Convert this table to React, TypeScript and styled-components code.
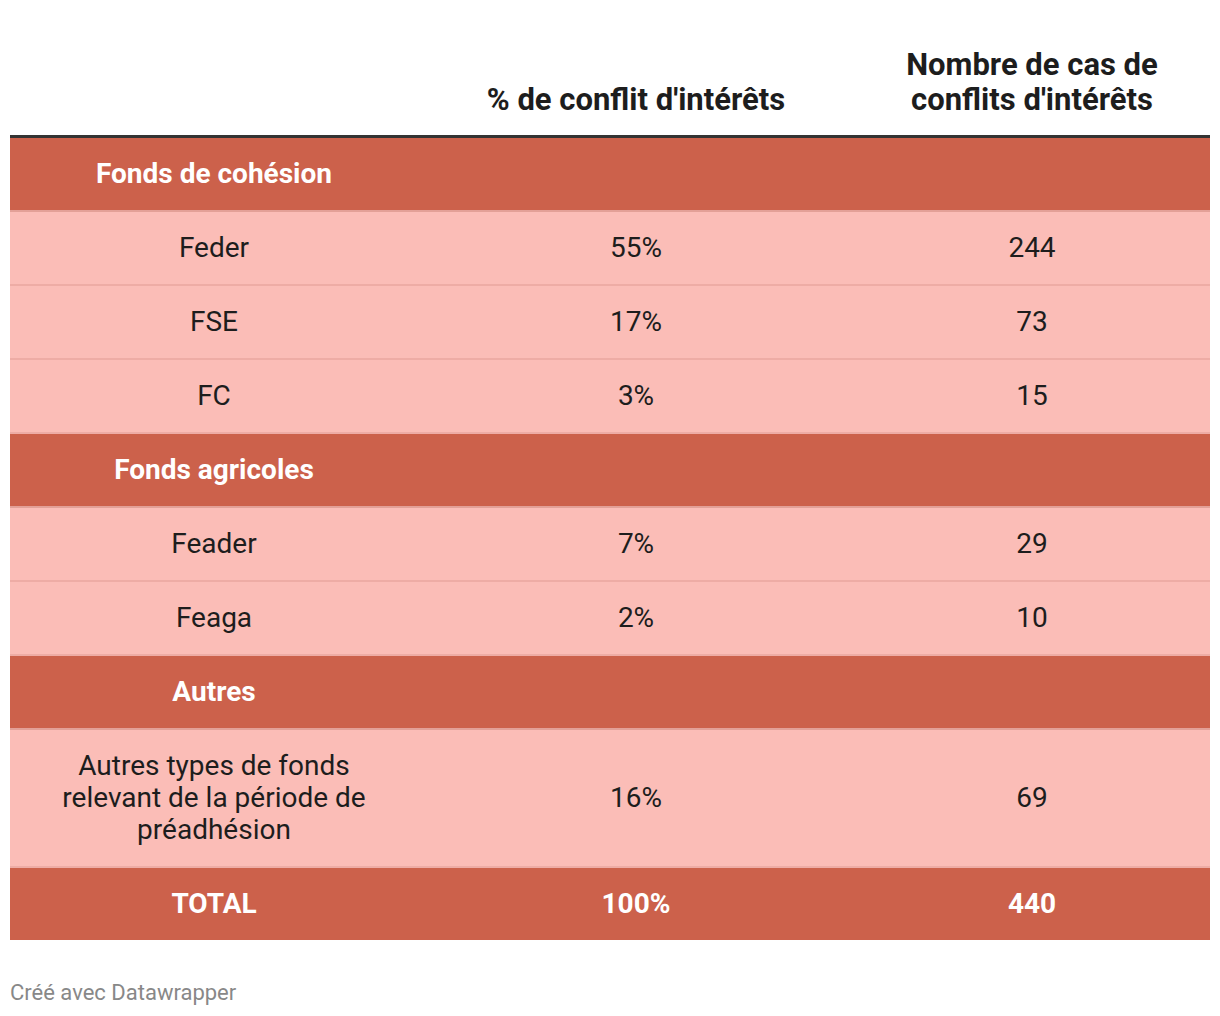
import { FC } from 'react';
import styled, { createGlobalStyle } from 'styled-components';

type Row =
  | { kind: 'section'; label: string }
  | { kind: 'data'; label: string; pct: string; count: string; tall?: boolean }
  | { kind: 'total'; label: string; pct: string; count: string };

const rows: Row[] = [
  { kind: 'section', label: 'Fonds de cohésion' },
  { kind: 'data', label: 'Feder', pct: '55%', count: '244' },
  { kind: 'data', label: 'FSE', pct: '17%', count: '73' },
  { kind: 'data', label: 'FC', pct: '3%', count: '15' },
  { kind: 'section', label: 'Fonds agricoles' },
  { kind: 'data', label: 'Feader', pct: '7%', count: '29' },
  { kind: 'data', label: 'Feaga', pct: '2%', count: '10' },
  { kind: 'section', label: 'Autres' },
  { kind: 'data', label: 'Autres types de fonds relevant de la période de préadhésion', pct: '16%', count: '69', tall: true },
  { kind: 'total', label: 'TOTAL', pct: '100%', count: '440' },
];

const App: FC = () => (
  <>
    <GlobalStyle />
    <Page>
      <Table>
        <colgroup>
          <col style={{ width: 408 }} />
          <col style={{ width: 436 }} />
          <col style={{ width: 356 }} />
        </colgroup>
        <thead>
          <tr>
            <HeadCell />
            <HeadCell>% de conflit d'intérêts</HeadCell>
            <HeadCell>
              <HeadWrap>Nombre de cas de conflits d'intérêts</HeadWrap>
            </HeadCell>
          </tr>
        </thead>
        <tbody>
          {rows.map((r, i) => {
            if (r.kind === 'section')
              return (
                <DarkRow key={i}>
                  <Cell $bold>{r.label}</Cell>
                  <Cell />
                  <Cell />
                </DarkRow>
              );
            if (r.kind === 'total')
              return (
                <DarkRow key={i} $last>
                  <Cell $bold>{r.label}</Cell>
                  <Cell $bold>{r.pct}</Cell>
                  <Cell $bold>{r.count}</Cell>
                </DarkRow>
              );
            return (
              <LightRow key={i}>
                <Cell>{r.tall ? <Wrap>{r.label}</Wrap> : r.label}</Cell>
                <Cell>{r.pct}</Cell>
                <Cell>{r.count}</Cell>
              </LightRow>
            );
          })}
        </tbody>
      </Table>
      <Footer>Créé avec Datawrapper</Footer>
    </Page>
  </>
);

const GlobalStyle = createGlobalStyle`
  body {
    margin: 0;
    background: #ffffff;
    font-family: Roboto, "Liberation Sans", sans-serif;
  }
`;

const Page = styled.div`
  padding: 0 10px;
  width: 1200px;
`;

const Table = styled.table`
  width: 1200px;
  border-collapse: collapse;
  table-layout: fixed;
`;

const HeadCell = styled.th`
  height: 136px;
  padding: 0 0 18px;
  vertical-align: bottom;
  text-align: center;
  font-size: 31px;
  line-height: 35px;
  font-weight: 700;
  color: #1d1d1d;
  border-bottom: 3px solid #333333;
  box-sizing: border-box;
`;

const HeadWrap = styled.div`
  width: 270px;
  margin: 0 auto;
`;

const DarkRow = styled.tr<{ $last?: boolean }>`
  background: #cc614b;
  color: #ffffff;
  border-bottom: ${p => (p.$last ? 'none' : '2px solid #e3a097')};
`;

const LightRow = styled.tr`
  background: #fbbdb7;
  color: #1d1d1d;
  border-bottom: 2px solid #eeaca5;
`;

const Cell = styled.td<{ $bold?: boolean }>`
  height: 72px;
  padding: 0;
  text-align: center;
  vertical-align: middle;
  font-size: 28px;
  line-height: 32px;
  font-weight: ${p => (p.$bold ? 700 : 400)};
`;

const Wrap = styled.div`
  width: 330px;
  margin: 0 auto;
  padding: 20px 0;
`;

const Footer = styled.div`
  margin-top: 40px;
  font-size: 22px;
  line-height: 26px;
  color: #888888;
`;

export default App;
